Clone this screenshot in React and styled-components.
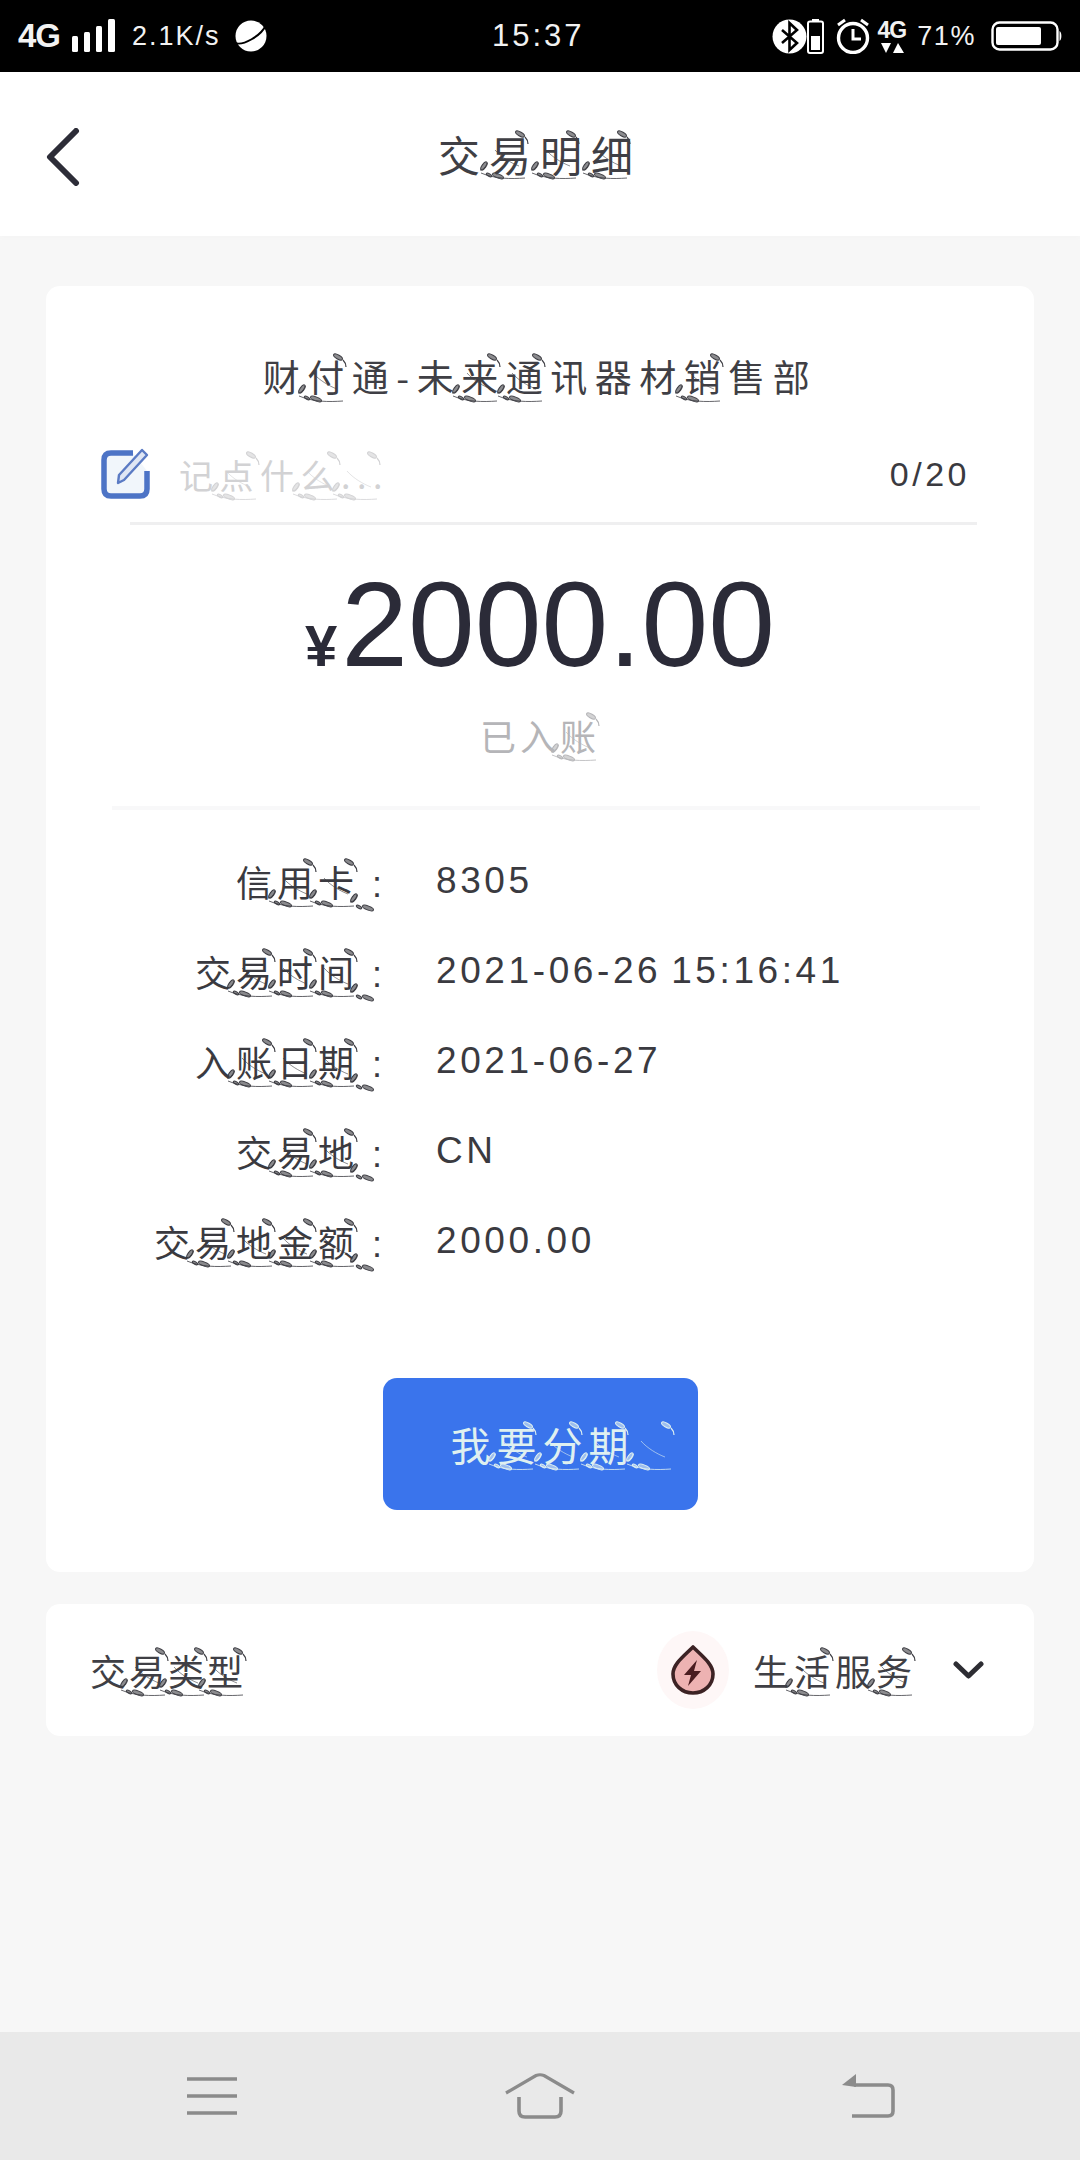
import React from "react";
import styled, { createGlobalStyle } from "styled-components";

const detailRows = [
  { label: "信用卡:", value: "8305" },
  { label: "交易时间:", value: "2021-06-26 15:16:41" },
  { label: "入账日期:", value: "2021-06-27" },
  { label: "交易地:", value: "CN" },
  { label: "交易地金额:", value: "2000.00" },
];

function Sprig({ top }) {
  return (
    <SprigLayer viewBox="0 0 36 36">
      <g fill="currentColor" fillOpacity="0.6" stroke="currentColor" strokeWidth="1">
        {top && <path d="M-8 36 C 6 42 22 42 36 41" fill="none" strokeWidth="0.8" />}
        <path d="M-9 33 C -6 33 -3 30 -2 26" fill="none" strokeWidth="0.9" />
        <ellipse cx="-5" cy="29" rx="4.8" ry="2" transform="rotate(-55 -5 29)" />
        <ellipse cx="0" cy="38" rx="3" ry="1.3" transform="rotate(30 0 38)" />
        <ellipse cx="9" cy="39" rx="5.8" ry="2" transform="rotate(20 9 39)" />
        {top && (
          <>
            <path d="M6 13 C 12 20 22 26 30 29" fill="none" strokeWidth="0.6" />
            <ellipse cx="31" cy="-3" rx="5" ry="2" transform="rotate(30 31 -3)" />
            <path d="M36 0 C 38 2 39 4 39 7" fill="none" strokeWidth="1.2" />
          </>
        )}
      </g>
    </SprigLayer>
  );
}

// splits text into cells, the marked ones get a sprig (all but the first by default)
function Vined({ text, marks }) {
  const chars = Array.from(text);
  return (
    <>
      {chars.map((ch, i) => {
        const marked = marks ? marks.includes(i) : i > 0;
        return (
          <CharCell key={i} $colon={ch === ":"}>
            {ch}
            {marked && <Sprig top={ch !== ":"} />}
          </CharCell>
        );
      })}
    </>
  );
}

function SignalIcon() {
  return (
    <StatusSvg width="46" height="34" viewBox="0 0 46 34">
      <rect x="2" y="17" width="6" height="16" rx="1.5" />
      <rect x="14" y="13" width="6" height="20" rx="1.5" />
      <rect x="26" y="7" width="6" height="26" rx="1.5" />
      <rect x="38" y="0" width="7" height="33" rx="1.5" />
    </StatusSvg>
  );
}

function PlanetIcon() {
  return (
    <PlanetSvg width="34" height="34" viewBox="0 0 34 34">
      <circle cx="17" cy="17" r="15.5" />
      <path d="M1 24 C 9 27 27 17 32 6" fill="none" stroke="#000" strokeWidth="2" />
    </PlanetSvg>
  );
}

function BluetoothIcon() {
  return (
    <StatusSvg width="35" height="35" viewBox="0 0 35 35">
      <circle cx="17.5" cy="17.5" r="17" />
      <path d="M10 11 L25 24 L17.5 31 V4 L25 11 L10 24" fill="none" stroke="#000" strokeWidth="2.6" />
    </StatusSvg>
  );
}

function SmallBatteryIcon() {
  return (
    <StatusSvg width="17" height="35" viewBox="0 0 17 35">
      <rect x="5" y="0" width="7" height="3" />
      <rect x="1" y="2.5" width="15" height="31.5" rx="2" fill="none" stroke="#fff" strokeWidth="2" />
      <rect x="4" y="17" width="9" height="14" />
    </StatusSvg>
  );
}

function AlarmIcon() {
  return (
    <StatusSvg width="34" height="36" viewBox="0 0 34 36">
      <circle cx="17" cy="20" r="14.5" fill="none" stroke="#fff" strokeWidth="3.4" />
      <path d="M17 11 V21 H25" fill="none" stroke="#fff" strokeWidth="3" />
      <path d="M2 7 L9 2 M32 7 L25 2" fill="none" stroke="#fff" strokeWidth="3" />
    </StatusSvg>
  );
}

function DataArrows() {
  return (
    <StatusSvg width="26" height="10" viewBox="0 0 26 10">
      <path d="M2 0 H12 L7 10 Z" />
      <path d="M19 0 L25 10 H14 Z" />
    </StatusSvg>
  );
}

function BatteryIcon() {
  return (
    <StatusSvg width="72" height="30" viewBox="0 0 72 30">
      <rect x="1.5" y="1.5" width="65" height="27" rx="7" fill="none" stroke="#fff" strokeWidth="2.4" />
      <rect x="5" y="6" width="45" height="18" rx="2" />
      <path d="M68.5 10 C 71 11 71 19 68.5 20 Z" />
    </StatusSvg>
  );
}

function BackIcon() {
  return (
    <svg width="34" height="58" viewBox="0 0 34 58">
      <path d="M30 3 L4 29 L30 55" fill="none" stroke="#2d2d38" strokeWidth="6" strokeLinecap="round" strokeLinejoin="round" />
    </svg>
  );
}

function EditIcon() {
  return (
    <svg width="50" height="54" viewBox="0 0 50 54">
      <path d="M32 6 H10 Q3 6 3 13 V42 Q3 49 10 49 H39 Q46 49 46 42 V24" fill="#f1f6fb" stroke="#4d74c6" strokeWidth="5.5" />
      <path d="M17 36 L18 28 L41 3 L46 8 L23 33 Z" fill="#dfe6f4" stroke="#5b7bc4" strokeWidth="2.4" strokeLinejoin="round" />
    </svg>
  );
}

function DropIcon() {
  return (
    <svg width="44" height="50" viewBox="0 0 44 50">
      <path d="M22 2 C 31 11 42 19 42 29 C 42 40 33 48 22 48 C 11 48 2 40 2 29 C 2 19 13 11 22 2 Z" fill="#edb2b2" stroke="#3c2224" strokeWidth="3.6" strokeLinejoin="round" />
      <path d="M26 15 L13 30 H20 L17 41 L30 26 H23 Z" fill="#4a1c20" />
    </svg>
  );
}

function ChevronIcon() {
  return (
    <svg width="31" height="19" viewBox="0 0 31 19">
      <path d="M3 3 L15.5 15 L28 3" fill="none" stroke="#2d2d33" strokeWidth="5" strokeLinecap="round" strokeLinejoin="round" />
    </svg>
  );
}

function MenuIcon() {
  return (
    <svg width="52" height="38" viewBox="0 0 52 38">
      <path d="M1 2 H51 M1 19 H51 M1 36 H51" fill="none" stroke="#8b8b8b" strokeWidth="3.6" />
    </svg>
  );
}

function HomeIcon() {
  return (
    <svg width="72" height="46" viewBox="0 0 72 46">
      <path d="M2 20 L32 2.5 Q36 1 40 2.5 L70 20" fill="none" stroke="#8b8b8b" strokeWidth="3.2" />
      <path d="M15 24 V38 Q15 44 21 44 H51 Q57 44 57 38 V24" fill="none" stroke="#8b8b8b" strokeWidth="3.6" />
    </svg>
  );
}

function ReturnIcon() {
  return (
    <svg width="54" height="46" viewBox="0 0 54 46">
      <path d="M12 12 H46 Q51 12 51 17 V38 Q51 43 46 43 H10" fill="none" stroke="#8b8b8b" strokeWidth="3.6" />
      <path d="M0 12 L14 1 V14 Z" fill="#8b8b8b" />
    </svg>
  );
}

export default function App() {
  return (
    <Screen>
      <GlobalStyle />
      <StatusBar>
        <StatusGroup>
          <NetworkText>4G</NetworkText>
          <SignalIcon />
          <SpeedText>2.1K/s</SpeedText>
          <PlanetIcon />
        </StatusGroup>
        <ClockText>15:37</ClockText>
        <StatusGroupRight>
          <BluetoothIcon />
          <SmallBatteryIcon />
          <AlarmSlot>
            <AlarmIcon />
          </AlarmSlot>
          <DataStack>
            <DataLabel>4G</DataLabel>
            <DataArrows />
          </DataStack>
          <PercentText>71%</PercentText>
          <BatteryIcon />
        </StatusGroupRight>
      </StatusBar>

      <Header>
        <BackButton>
          <BackIcon />
        </BackButton>
        <Title>
          <Vined text="交易明细" />
        </Title>
      </Header>

      <Main>
        <Card>
          <Merchant>
            <Vined text="财付通-未来通讯器材销售部" marks={[1, 5, 6, 10]} />
          </Merchant>
          <MemoRow>
            <EditIcon />
            <MemoPlaceholder>
              <Vined text="记点什么..." marks={[1, 3, 4]} />
            </MemoPlaceholder>
            <MemoCount>0/20</MemoCount>
          </MemoRow>
          <MemoDivider />
          <AmountRow>
            <Currency>¥</Currency>
            <Amount>2000.00</Amount>
          </AmountRow>
          <AmountStatus>
            <Vined text="已入账" marks={[2]} />
          </AmountStatus>
          <AmountDivider />
          <DetailList>
            {detailRows.map((row) => (
              <DetailRow key={row.label}>
                <DetailLabel>
                  <Vined text={row.label} />
                </DetailLabel>
                <DetailValue>{row.value}</DetailValue>
              </DetailRow>
            ))}
          </DetailList>
          <InstallmentButton>
            <Vined text={"我要分期\u3000"} />
          </InstallmentButton>
        </Card>

        <TypeCard>
          <TypeLabel>
            <Vined text="交易类型" />
          </TypeLabel>
          <TypeValue>
            <DropHalo>
              <DropIcon />
            </DropHalo>
            <TypeName>
              <Vined text="生活服务" marks={[1, 3]} />
            </TypeName>
            <ChevronIcon />
          </TypeValue>
        </TypeCard>
      </Main>

      <BottomNav>
        <MenuIcon />
        <HomeIcon />
        <ReturnIcon />
      </BottomNav>
    </Screen>
  );
}

// ==== STYLED COMPONENT ====
const GlobalStyle = createGlobalStyle`
  * {
    box-sizing: border-box;
  }

  body {
    margin: 0;
    background: #f7f7f7;
    font-family: "Liberation Sans", "Noto Sans CJK SC", sans-serif;
  }
`;

const Screen = styled.div`
  display: flex;
  flex-direction: column;
  width: 1080px;
  height: 2160px;
  overflow: hidden;
  background: #f7f7f7;
`;

const StatusBar = styled.div`
  position: relative;
  display: flex;
  align-items: center;
  justify-content: space-between;
  flex: 0 0 72px;
  padding: 0 17px 0 18px;
  background: #000;
  color: #f2f2f2;
`;

const StatusGroup = styled.div`
  display: flex;
  align-items: center;
  gap: 16px;
`;

const StatusGroupRight = styled.div`
  display: flex;
  align-items: center;
`;

const StatusSvg = styled.svg`
  display: block;
  flex: none;
  fill: #fff;
`;

const PlanetSvg = styled(StatusSvg)`
  margin-left: -3px;
`;

const NetworkText = styled.span`
  margin-right: -6px;
  font-size: 33px;
  font-weight: 700;
  letter-spacing: -1px;
`;

const SpeedText = styled.span`
  font-size: 27px;
  letter-spacing: 2px;
`;

const ClockText = styled.span`
  position: absolute;
  left: 492px;
  font-size: 31px;
  letter-spacing: 3px;
`;

const AlarmSlot = styled.div`
  margin-left: 12px;
`;

const DataStack = styled.div`
  display: flex;
  flex-direction: column;
  align-items: center;
  gap: 3px;
  margin-left: 7px;
`;

const DataLabel = styled.span`
  font-size: 23px;
  line-height: 20px;
  font-weight: 700;
  letter-spacing: -1px;
`;

const PercentText = styled.span`
  margin: 0 15px 0 11px;
  font-size: 27px;
  letter-spacing: 1.6px;
`;

const Header = styled.header`
  position: relative;
  display: flex;
  align-items: center;
  justify-content: center;
  flex: 0 0 164px;
  background: #fff;
  box-shadow: 0 2px 6px rgba(0, 0, 0, 0.015);
`;

const BackButton = styled.div`
  position: absolute;
  left: 46px;
  top: 56px;
`;

const Title = styled.h1`
  margin: -2px 0 0;
  font-family: "Noto Sans CJK SC", sans-serif;
  font-size: 42px;
  font-weight: 400;
  letter-spacing: 9px;
  color: #3f3f45;
`;

const CharCell = styled.span`
  position: relative;
  display: inline-block;
  ${(p) => p.$colon && `
    width: 1em;
    font-family: "Liberation Sans", sans-serif;
    text-align: center;
    letter-spacing: 0;
  `}
`;

const SprigLayer = styled.svg`
  position: absolute;
  left: 0;
  top: 50%;
  width: 36px;
  height: 36px;
  margin-top: -16px;
  overflow: visible;
  pointer-events: none;
  color: inherit;
`;

const Main = styled.main`
  display: flex;
  flex-direction: column;
  flex: 1;
  gap: 32px;
  padding: 50px 46px 0;
`;

const Card = styled.section`
  display: flex;
  flex-direction: column;
  height: 1286px;
  padding-top: 65px;
  border-radius: 14px;
  background: #fff;
`;

const Merchant = styled.div`
  font-family: "Noto Sans CJK SC", sans-serif;
  font-size: 37px;
  line-height: 50px;
  letter-spacing: 7.5px;
  text-align: center;
  color: #3f3f45;
`;

const MemoRow = styled.div`
  display: flex;
  align-items: center;
  height: 74px;
  margin-top: 36px;
  padding: 0 64px 0 55px;
`;

const MemoPlaceholder = styled.div`
  flex: 1;
  margin-left: 28px;
  font-family: "Noto Sans CJK SC", sans-serif;
  font-size: 34px;
  letter-spacing: 6.5px;
  color: #d2d2d4;
`;

const MemoCount = styled.span`
  font-size: 34px;
  letter-spacing: 3.5px;
  color: #3a3a40;
`;

const MemoDivider = styled.div`
  height: 3px;
  margin: 11px 57px 0 84px;
  background: #efeff0;
`;

const AmountRow = styled.div`
  display: flex;
  align-items: baseline;
  justify-content: center;
  margin-top: 34px;
  line-height: 130px;
  color: #2b2b38;
`;

const Currency = styled.span`
  margin-right: 4px;
  font-size: 58px;
  line-height: 58px;
  font-weight: 700;
`;

const Amount = styled.span`
  font-size: 120px;
`;

const AmountStatus = styled.div`
  margin-top: 21px;
  font-family: "Noto Sans CJK SC", sans-serif;
  font-size: 36px;
  line-height: 50px;
  letter-spacing: 4px;
  text-align: center;
  color: #b5b5b8;
`;

const AmountDivider = styled.div`
  height: 4px;
  margin: 46px 54px 0 66px;
  background: #f8f8f9;
`;

const DetailList = styled.dl`
  display: flex;
  flex-direction: column;
  gap: 40px;
  margin: 46px 0 0;
`;

const DetailRow = styled.div`
  display: flex;
  align-items: center;
  height: 50px;
`;

const DetailLabel = styled.dt`
  flex: 0 0 349px;
  font-family: "Noto Sans CJK SC", sans-serif;
  font-size: 36px;
  letter-spacing: 5px;
  text-align: right;
  color: #3a3a40;
`;

const DetailValue = styled.dd`
  margin: 0 0 0 41px;
  font-size: 37px;
  letter-spacing: 3.6px;
  word-spacing: -4px;
  color: #3a3a40;
`;

const InstallmentButton = styled.button`
  align-self: center;
  width: 315px;
  height: 132px;
  margin-top: 112px;
  padding: 0 0 0 68px;
  border: 0;
  border-radius: 14px;
  background: #3a74ec;
  font-family: "Noto Sans CJK SC", sans-serif;
  font-size: 40px;
  letter-spacing: 6px;
  text-align: left;
  white-space: nowrap;
  color: #dff0f0;
`;

const TypeCard = styled.section`
  display: flex;
  align-items: center;
  justify-content: space-between;
  height: 132px;
  padding: 0 50px 0 44px;
  border-radius: 14px;
  background: #fff;
`;

const TypeLabel = styled.div`
  font-family: "Noto Sans CJK SC", sans-serif;
  font-size: 36px;
  letter-spacing: 3px;
  color: #3f3f45;
`;

const TypeValue = styled.div`
  display: flex;
  align-items: center;
`;

const DropHalo = styled.div`
  display: flex;
  align-items: center;
  justify-content: center;
  width: 72px;
  height: 78px;
  border-radius: 50%;
  background: #fef7f7;
`;

const TypeName = styled.div`
  margin: 0 36px 0 24px;
  font-family: "Noto Sans CJK SC", sans-serif;
  font-size: 36px;
  letter-spacing: 5px;
  color: #3f3f45;
`;

const BottomNav = styled.nav`
  display: flex;
  align-items: center;
  flex: 0 0 128px;
  justify-content: space-between;
  padding: 0 184px 0 186px;
  background: #e9e9e9;
`;
